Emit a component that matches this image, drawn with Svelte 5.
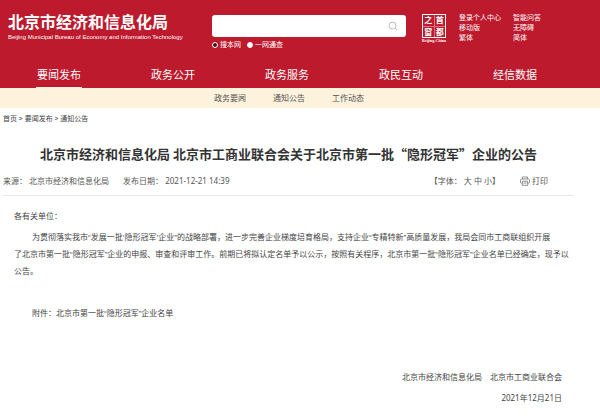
<script>
  const nav = ['要闻发布', '政务公开', '政务服务', '政民互动', '经信数据'];
  const subnav = ['政务要闻', '通知公告', '工作动态'];
  const tools = ['登录个人中心', '智能问答', '移动版', '无障碍', '繁体', '简体'];
  let scope = $state('all');
</script>

<header>
  <div class="top">
    <a class="brand" href="#home">
      <span class="name">北京市经济和信息化局</span>
      <span class="en">Beijing Municipal Bureau of Economy and Information Technology</span>
    </a>
    <form class="search">
      <div class="box">
        <input type="text" aria-label="搜索" />
        <button type="button" aria-label="搜索">
          <svg viewBox="0 0 10 10" width="10" height="10" fill="none" stroke="#bbb" stroke-width="1">
            <circle cx="4.6" cy="4.6" r="3.5" />
            <path d="M7.2 7.2 9 9" />
          </svg>
        </button>
      </div>
      <div class="scopes">
        <label><input type="radio" name="scope" value="site" bind:group={scope} />搜本网</label>
        <label><input type="radio" name="scope" value="all" bind:group={scope} />一网通查</label>
      </div>
    </form>
    <a class="seal" href="#capital" aria-label="首都之窗">
      <span class="stamp"><i>之</i><i>首</i><i>窗</i><i>都</i></span>
      <span class="seal-en">Beijing-China</span>
    </a>
    <div class="tools">
      {#each tools as t}<a href="#tool">{t}</a>{/each}
    </div>
  </div>
  <nav class="main-nav">
    {#each nav as n, i}<a href="#nav" class:active={i === 0}>{n}</a>{/each}
  </nav>
</header>
<nav class="sub-nav">
  {#each subnav as s}<a href="#sub">{s}</a>{/each}
</nav>

<div class="crumbs">
  <a href="#home">首页</a> &gt; <a href="#news">要闻发布</a> &gt; <a href="#notice">通知公告</a>
</div>

<main>
  <h1>北京市经济和信息化局 北京市工商业联合会关于北京市第一批“隐形冠军”企业的公告</h1>
  <div class="meta">
    <span class="source">来源： 北京市经济和信息化局</span>
    <span>发布日期： 2021-12-21 14:39</span>
    <span class="size">【字体： <a href="#l">大</a> <a href="#m">中</a> <a href="#s">小</a>】</span>
    <button class="print" type="button">
      <svg viewBox="0 0 10 10" width="10" height="10" fill="none" stroke="#777" stroke-width=".8">
        <path d="M2.5 3V1h5v2M2.2 7.2H1.4Q.5 7.2.5 6V4.2Q.5 3 1.7 3h6.6q1.2 0 1.2 1.2V6q0 1.2-.9 1.2h-.8M2.6 5.2h4.8l.5 4.1H2.1zM3.4 7h3.2" />
      </svg>打印
    </button>
  </div>
  <article>
    <p class="greeting">各有关单位：</p>
    <p class="indent">为贯彻落实我市“发展一批‘隐形冠军’企业”的战略部署，进一步完善企业梯度培育格局，支持企业“专精特新”高质量发展，我局会同市工商联组织开展<br />了北京市第一批“隐形冠军”企业的申报、审查和评审工作。前期已将拟认定名单予以公示，按照有关程序，北京市第一批“隐形冠军”企业名单已经确定，现予以<br />公告。</p>
    <p class="indent attachment">附件：北京市第一批“隐形冠军”企业名单</p>
    <div class="signature">
      <p><span>北京市经济和信息化局</span><span>北京市工商业联合会</span></p>
      <p>2021年12月21日</p>
    </div>
  </article>
</main>

<style>
  :global(body) {
    background: #fff;
    color: #444;
    font: 8px/16px "Noto Sans", "Noto Sans CJK SC", sans-serif;
  }
  a { color: inherit; text-decoration: none; }
  p, h1 { margin: 0; }
  button { border: 0; padding: 0; background: none; color: inherit; font: inherit; }
  svg { display: block; }

  header { background: #bd1a2d; color: #fff; }
  .top { display: flex; align-items: flex-start; height: 60px; padding: 0 8px; }
  .brand { display: flex; flex-direction: column; flex: none; width: 204px; padding-top: 12px; }
  .name { font-size: 16px; line-height: 20px; font-weight: 700; }
  .en { font: 6px/10px "Liberation Sans", Arial, sans-serif; white-space: nowrap; }

  .search { flex: none; width: 194px; padding-top: 15px; }
  .box { display: flex; align-items: center; height: 22px; border-radius: 3px; background: #fff; }
  .box input { flex: 1; min-width: 0; height: 20px; padding: 0 6px; border: 0; outline: 0; background: none; font: inherit; }
  .box button { padding: 0 8px; }
  .scopes { display: flex; gap: 6px; padding-top: 3px; font-size: 7px; line-height: 10px; }
  .scopes label { display: flex; align-items: center; gap: 2px; }
  .scopes input {
    appearance: none; box-sizing: border-box; width: 6px; height: 6px; margin: 0;
    border: 1px solid #fff; border-radius: 50%; background: #4b0c14;
  }
  .scopes input:checked { background: #fff; }

  .seal { display: flex; flex-direction: column; align-items: center; flex: none; width: 28px; margin-left: 14px; padding-top: 14px; }
  .stamp {
    display: grid; grid-template-columns: 1fr 1fr; box-sizing: border-box;
    width: 24px; height: 24px; border: 1px solid #fff; gap: 1px; background: #d9747f;
  }
  .stamp i { background: #bd1a2d; font: 700 8px/10px "Noto Sans CJK SC", sans-serif; text-align: center; }
  .seal-en { font: 700 4px/5px "Liberation Serif", serif; white-space: nowrap; }

  .tools { display: grid; grid-template-columns: 54px auto; margin-left: 11px; padding-top: 13px; font-size: 7px; line-height: 10px; white-space: nowrap; }

  .main-nav { display: flex; height: 28px; padding: 0 28px 0 2px; }
  .main-nav a { flex: 1; display: flex; justify-content: center; font-size: 11px; line-height: 29px; }
  .main-nav a.active { background: linear-gradient(#fdf2dc, #fdf2dc) center bottom / 46px 1px no-repeat; }
  .sub-nav { display: flex; justify-content: center; gap: 27px; height: 20px; padding-right: 22px; background: #fdf2dc; line-height: 20px; color: #555; }

  .crumbs { padding: 3px 3px 0; font-size: 7px; }
  main { margin: 0 26px 0 3px; }
  h1 {
    padding-top: 17px; text-align: center; color: #333; white-space: nowrap;
    font: 700 13px/20px "Noto Sans CJK SC", sans-serif;
  }
  .meta { display: flex; align-items: center; height: 28px; padding-top: 3px; border-bottom: 1px solid #e8e8e8; color: #555; white-space: nowrap; }
  .source { margin-right: 14px; }
  .size { margin-left: auto; }
  .print { display: flex; align-items: center; gap: 2px; margin: 0 26px 0 20px; }

  article { padding: 12px 12px 0 11px; font-family: "Liberation Sans", "Noto Sans CJK SC", sans-serif; line-height: 17px; white-space: nowrap; }
  .greeting { margin-bottom: 4px; }
  .indent { text-indent: 18px; }
  .attachment { margin-top: 25px; }
  .signature { margin-top: 46px; text-align: right; font-family: "Noto Sans", "Noto Sans CJK SC", sans-serif; }
  .signature p { margin-bottom: 4px; }
  .signature span + span { margin-left: 8px; }
</style>
